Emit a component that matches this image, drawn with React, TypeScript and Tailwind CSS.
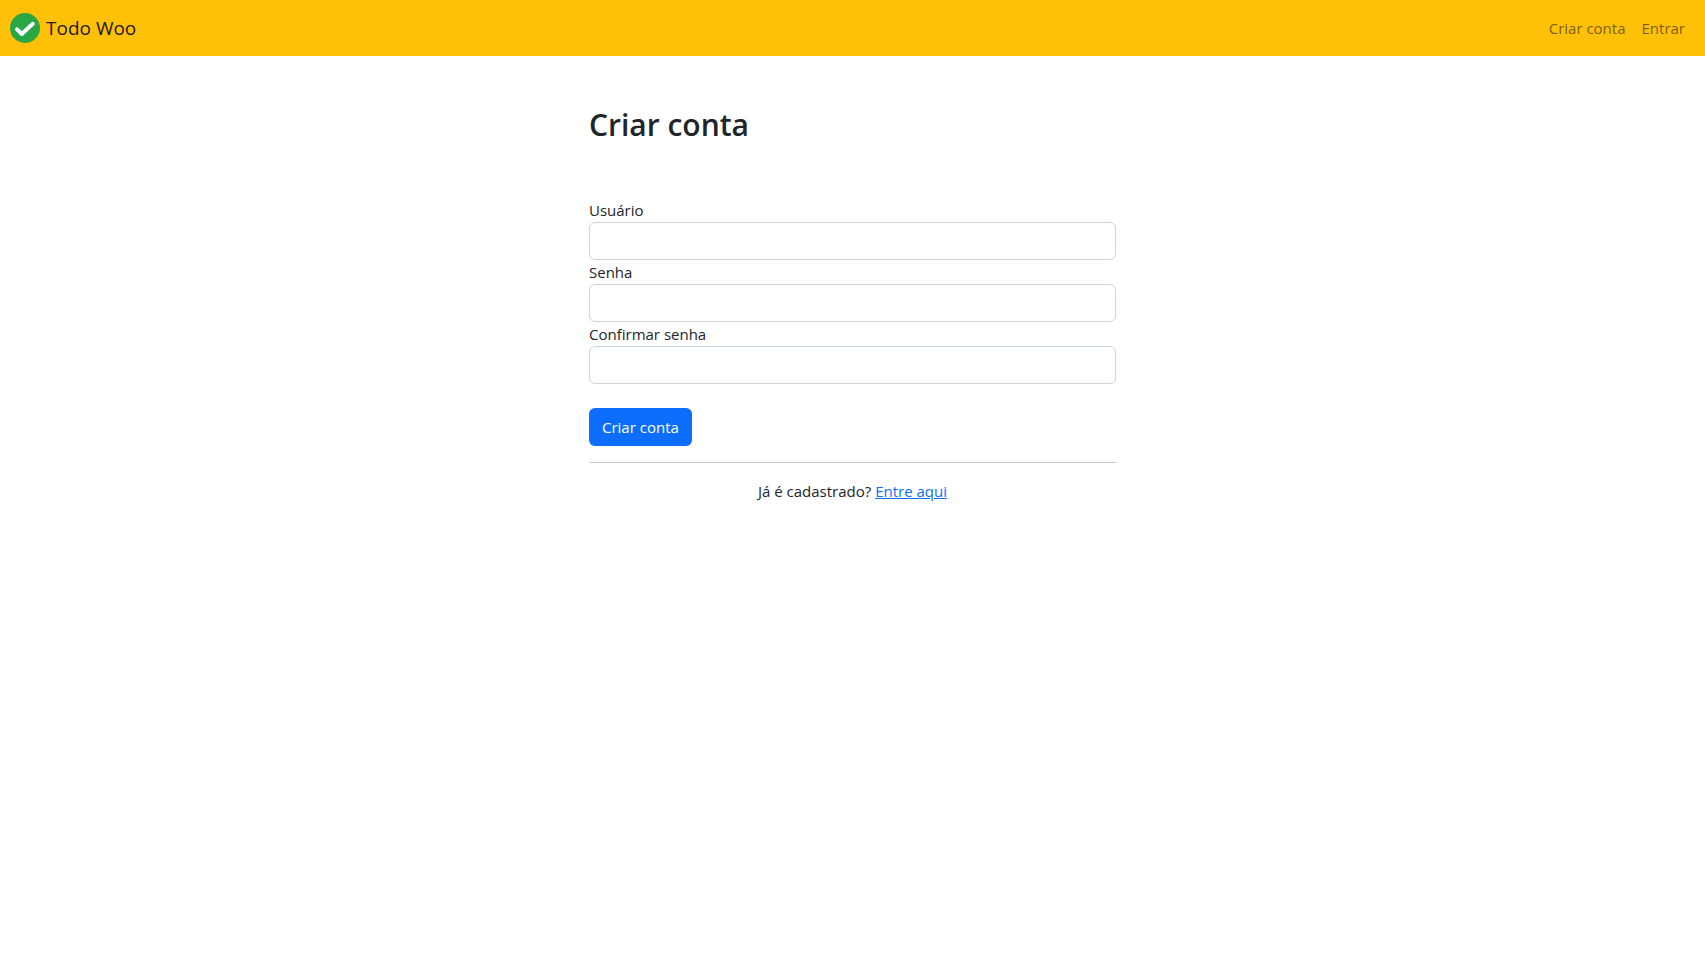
const fields = [
  { id: "username", label: "Usuário", type: "text" },
  { id: "password1", label: "Senha", type: "password" },
  { id: "password2", label: "Confirmar senha", type: "password" },
];

function Logo() {
  return (
    <svg width="30" height="30" viewBox="0 0 30 30" aria-hidden="true">
      <circle cx="15" cy="15" r="15" fill="#28a745" />
      <path
        d="M7 16.4 11.8 21 22.8 10.8"
        fill="none"
        stroke="#fff"
        strokeWidth="4"
        strokeLinecap="round"
        strokeLinejoin="round"
      />
    </svg>
  );
}

export default function App() {
  return (
    <div className="min-h-screen bg-white font-['Open_Sans',sans-serif] text-[15px] leading-6 text-[#212529]">
      <nav className="flex h-14 items-center justify-between bg-[#ffc107] pr-5 pl-2.5">
        <a href="#" className="flex items-center gap-1.5 text-[19px] text-black/90">
          <Logo />
          Todo Woo
        </a>
        <div className="flex gap-4 text-black/55">
          <a href="#criar">Criar conta</a>
          <a href="#entrar">Entrar</a>
        </div>
      </nav>

      <main className="mx-auto max-w-[527px] pt-[50px]">
        <h1 className="mb-[54px] text-3xl leading-[38px] font-semibold">Criar conta</h1>
        <form>
          {fields.map((f) => (
            <div key={f.id}>
              <label htmlFor={f.id} className="block">
                {f.label}
              </label>
              <input
                id={f.id}
                name={f.id}
                type={f.type}
                className="block h-[38px] w-full rounded-md border border-[#ced4da] bg-white px-3"
              />
            </div>
          ))}
          <button
            type="submit"
            className="mt-6 h-[38px] rounded-md bg-[#0d6efd] px-[13px] text-white"
          >
            Criar conta
          </button>
        </form>
        <hr className="my-4 border-t border-[#c7c8c9]" />
        <p className="text-center">
          Já é cadastrado?{" "}
          <a href="#entrar" className="text-[#0d6efd] underline">
            Entre aqui
          </a>
        </p>
      </main>
    </div>
  );
}
